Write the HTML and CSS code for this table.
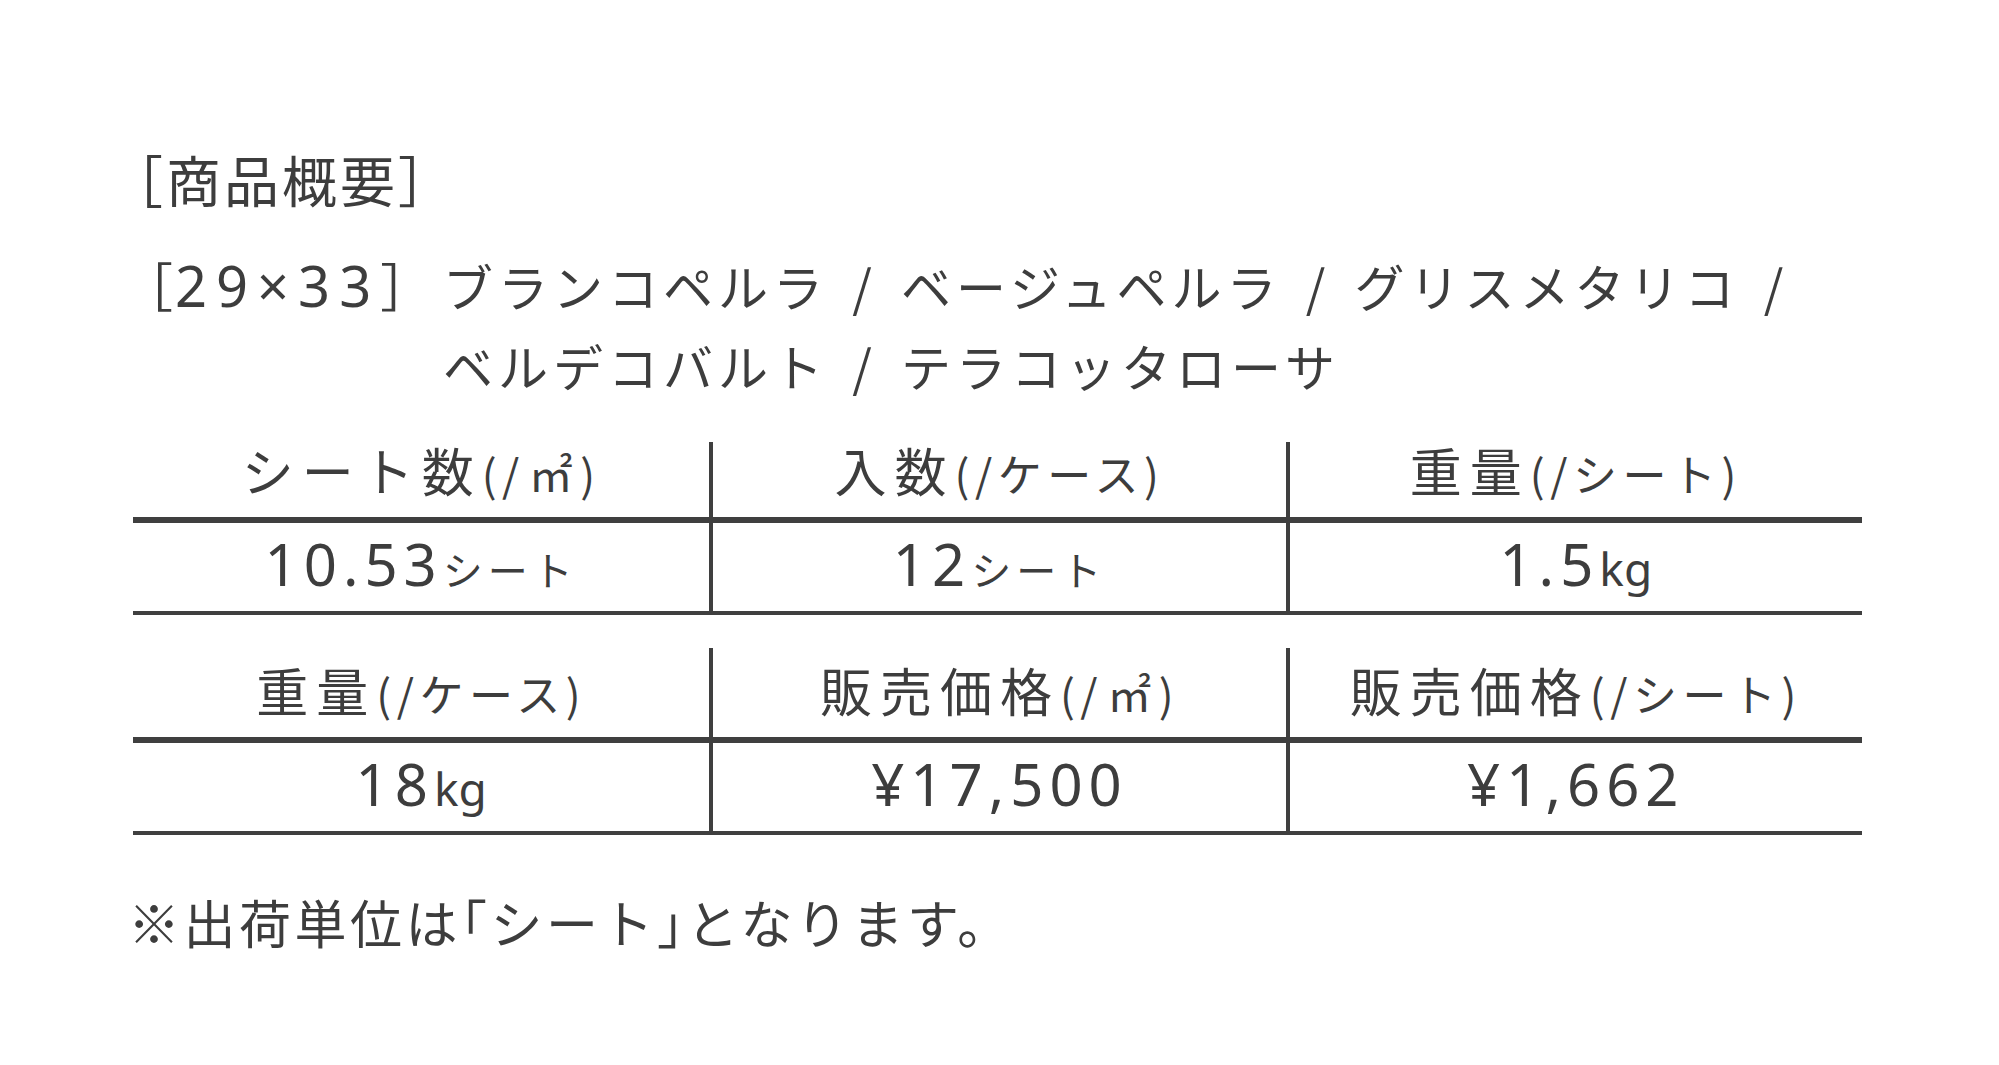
FILE: index.html
```html
<!DOCTYPE html>
<html lang="ja">
<head>
<meta charset="utf-8">
<title>商品概要</title>
<link rel="stylesheet" href="styles.css">
</head>
<body>
<div class="page">
  <h2 class="title">［商品概要］</h2>
  <div class="variants">
    <span class="size">［<span class="num">29×33</span>］</span>
    <p class="names">ブランコペルラ / ベージュペルラ / グリスメタリコ /<br>ベルデコバルト / テラコッタローサ</p>
  </div>

  <div class="spec spec-first">
    <div class="cell head"><span class="label">シート数<span class="sub">(/<span class="sq">㎡</span>)</span></span></div>
    <div class="cell head"><span class="label">入数<span class="sub">(/ケース)</span></span></div>
    <div class="cell head"><span class="label">重量<span class="sub">(/シート)</span></span></div>
    <div class="cell data"><span class="value"><span class="num">10.53</span><span class="unit">シート</span></span></div>
    <div class="cell data"><span class="value"><span class="num">12</span><span class="unit">シート</span></span></div>
    <div class="cell data"><span class="value"><span class="num">1.5</span><span class="unit kg">kg</span></span></div>
  </div>

  <div class="spec spec-second">
    <div class="cell head"><span class="label">重量<span class="sub">(/ケース)</span></span></div>
    <div class="cell head"><span class="label">販売価格<span class="sub">(/<span class="sq">㎡</span>)</span></span></div>
    <div class="cell head"><span class="label">販売価格<span class="sub">(/シート)</span></span></div>
    <div class="cell data"><span class="value"><span class="num">18</span><span class="unit kg">kg</span></span></div>
    <div class="cell data"><span class="value"><span class="num">¥17,500</span></span></div>
    <div class="cell data"><span class="value"><span class="num">¥1,662</span></span></div>
  </div>

  <p class="note">※出荷単位は<span class="br">「</span>シート<span class="br">」</span>となります。</p>
</div>
</body>
</html>
```

FILE: styles.css
```css
html, body {
  margin: 0;
  padding: 0;
  background: #ffffff;
}

body {
  font-family: "Noto Sans CJK JP", "Noto Sans", sans-serif;
  color: #3d3d3d;
}

.page {
  width: 1754px;
  padding: 143px 0 0 108px;
}

.title {
  margin: 0;
  font-size: 55px;
  font-weight: 400;
  line-height: 70px;
  letter-spacing: 3px;
}

.variants {
  display: flex;
  align-items: flex-start;
  margin-top: 32px;
  padding-left: 13px;
}

.size {
  width: 322px;
  flex: none;
  font-size: 52px;
  line-height: 80px;
  letter-spacing: 2px;
}

.size .num {
  font-family: "Noto Sans", sans-serif;
  font-size: 56px;
  letter-spacing: 9px;
}

.names {
  margin: 0;
  font-size: 50px;
  line-height: 80px;
  letter-spacing: 5px;
  word-spacing: 8px;
}

.spec {
  display: grid;
  grid-template-columns: repeat(3, 1fr);
  width: 1729px;
  margin-left: 25px;
}

.spec-first {
  margin-top: 37px;
}

.spec-second {
  margin-top: 33px;
}

.cell {
  box-sizing: border-box;
  display: flex;
  justify-content: center;
  align-items: center;
}

.cell:nth-child(3n+2),
.cell:nth-child(3n) {
  border-left: 4px solid #3f3f3f;
}

.head {
  align-items: flex-end;
  padding-bottom: 14px;
  border-bottom: 6px solid #3f3f3f;
}

.spec-first .head {
  height: 81px;
}

.spec-second .head {
  height: 95px;
}

.data {
  height: 92px;
  border-bottom: 4px solid #3f3f3f;
  padding-top: 8px;
}

.label {
  font-size: 52px;
  line-height: 60px;
  letter-spacing: 8px;
  white-space: nowrap;
}

.sub {
  font-size: 44px;
  letter-spacing: 5.5px;
}

.sub .sq {
  margin: 0 2px 0 4px;
}

.value {
  line-height: 70px;
  white-space: nowrap;
}

.num {
  font-family: "Noto Sans", sans-serif;
  font-size: 58px;
  letter-spacing: 6px;
}

.unit {
  font-size: 40px;
  letter-spacing: 5px;
}

.unit.kg {
  font-family: "Noto Sans", sans-serif;
  font-size: 46px;
  letter-spacing: 0;
}

.note {
  margin: 52px 0 0 20px;
  font-size: 52px;
  line-height: 70px;
  letter-spacing: 3.5px;
}

.note .br {
  font-feature-settings: "halt";
}
```
